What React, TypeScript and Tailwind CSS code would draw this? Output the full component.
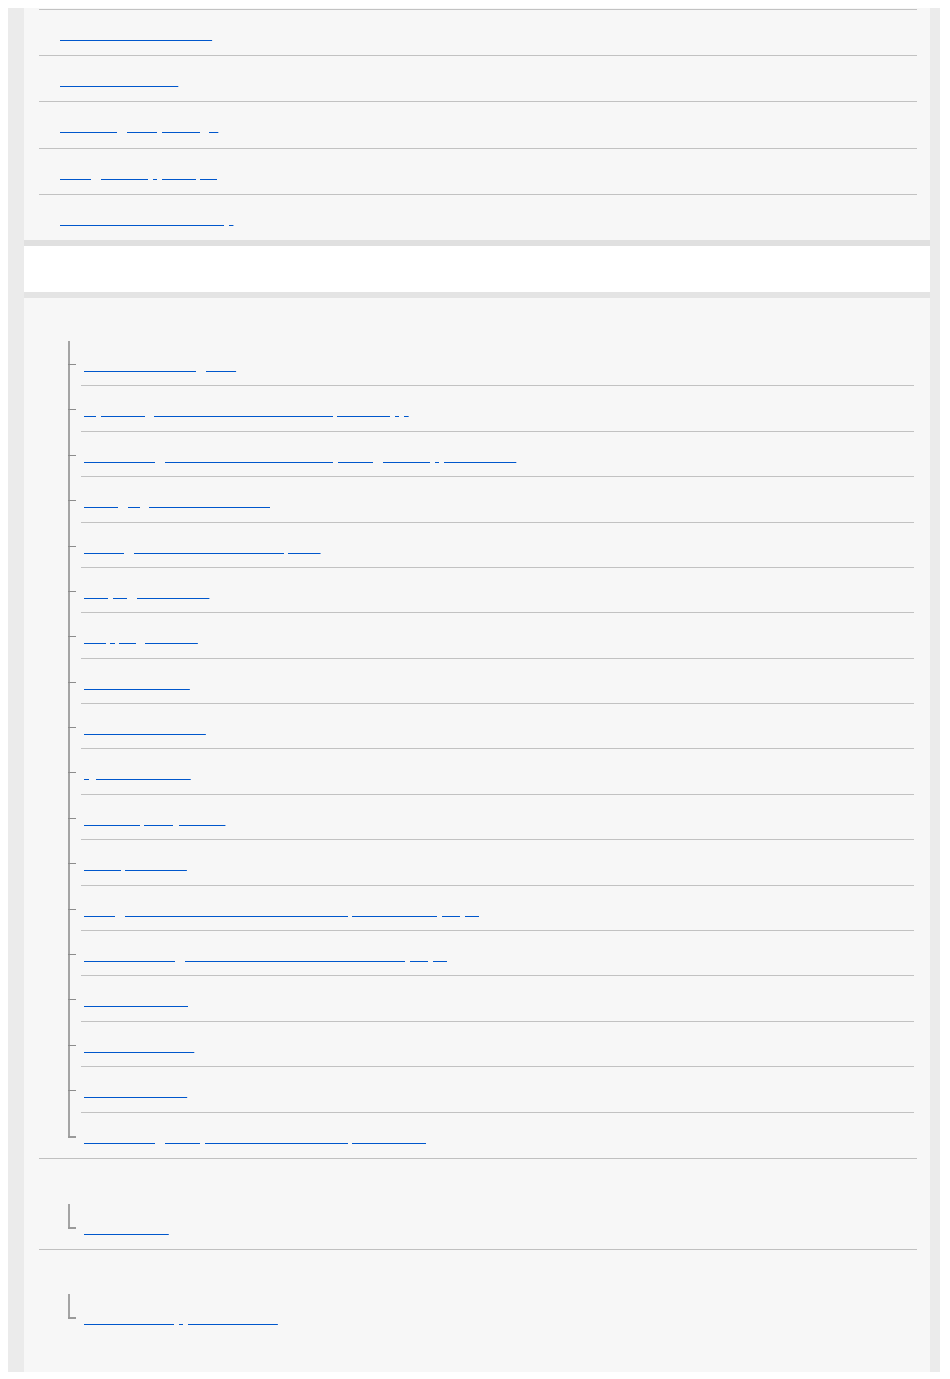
const topLinks = [
  "Notes on the headset",
  "Before initial use",
  "Checking the package",
  "Using the supplied plug",
  "Notes on the cable strap",
];

const treeLinks = [
  "Remote control guide",
  "Operating the headset with a smartphone app",
  "Connecting to a Bluetooth device by using the supplied cable",
  "Charging the headset using",
  "Pairing with a Windows computer",
  "Playing the music",
  "Skipping a track",
  "Volume control",
  "Headset features",
  "Quick attention",
  "Sound quality mode",
  "Auto power off",
  "Using the voice assist function of the phone while playing",
  "Disconnecting the Bluetooth connection after playing",
  "Noise canceling",
  "Status indicator",
  "Touch sensors",
  "Connecting to a paired Android smartphone using",
];

const groups = [
  { pad: "pt-[43px]", items: treeLinks, bordered: true },
  { pad: "pt-[45px]", items: ["Trademarks"], bordered: true },
  { pad: "pt-[44px]", items: ["Customer support websites"], bordered: false },
];

const linkClassName =
  "text-[16px] leading-6 text-transparent underline decoration-[#0057cc]";

function TreeRow({ label, isLast }: { label: string; isLast: boolean }) {
  return (
    <li className="flex h-[45.4px]">
      <div className="flex w-[13px] shrink-0 flex-col">
        <div className="h-[23px] border-l-2 border-[#a4a4a4]" />
        <div className={isLast ? "h-[2px] w-[8px] bg-[#9a9a9a]" : "h-px w-[8px] bg-[#8c8c8c]"} />
        {isLast ? null : <div className="flex-1 border-l-2 border-[#a4a4a4]" />}
      </div>
      <div className={isLast ? "flex-1 pl-[3px] pt-[12px]" : "flex-1 border-b border-[#c2c2c2] pl-[3px] pt-[12px]"}>
        <a href="#" className={linkClassName}>
          {label}
        </a>
      </div>
    </li>
  );
}

export default function App() {
  return (
    <div className="min-h-[1379px] bg-white pt-[8px] font-['Liberation_Sans',Arial,sans-serif]">
      <div className="ml-[8px] w-[932px] bg-[#ebebeb] pl-[16px] pr-[10px]">
        <section className="bg-[#f7f7f7] pt-[1px]">
          <ul className="ml-[15px] mr-[13px]">
            {topLinks.map((label) => (
              <li key={label} className="h-[46.2px] border-t border-[#c2c2c2] pl-[21px] pt-[12px]">
                <a href="#" className={linkClassName}>
                  {label}
                </a>
              </li>
            ))}
          </ul>
        </section>

        <div className="flex h-[58px] items-center border-y-[6px] border-t-[#e0e0e0] border-b-[#e4e4e4] bg-white px-[36px]">
          <h2 className="text-[18px] text-transparent">Listening to music</h2>
        </div>

        <section className="h-[1074px] bg-[#f7f7f7]">
          {groups.map((group, groupIndex) => (
            <div
              key={groupIndex}
              className={
                group.bordered
                  ? `ml-[15px] mr-[13px] border-b border-[#c0c0c0] ${group.pad}`
                  : `ml-[15px] mr-[13px] ${group.pad}`
              }
            >
              <ul className="ml-[29px] mr-[3px]">
                {group.items.map((label, index) => (
                  <TreeRow key={label} label={label} isLast={index === group.items.length - 1} />
                ))}
              </ul>
            </div>
          ))}
        </section>
      </div>
    </div>
  );
}
